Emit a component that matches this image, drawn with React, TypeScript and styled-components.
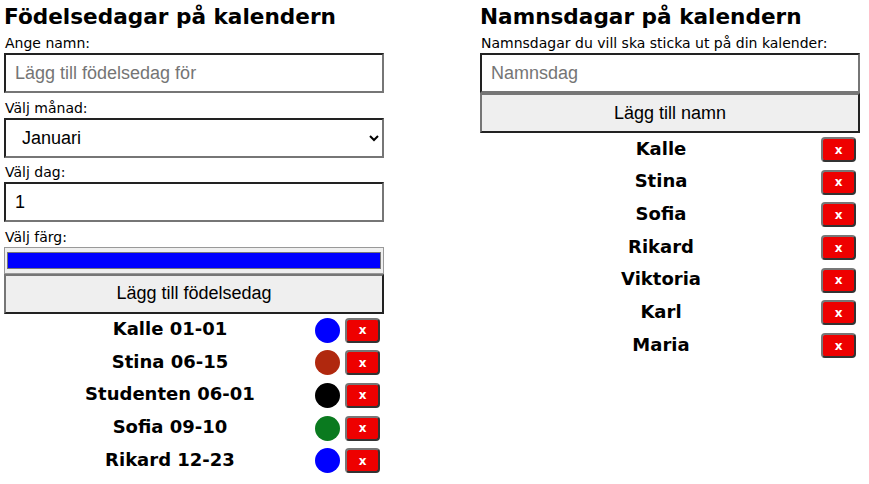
import React, { useState } from "react";
import styled, { createGlobalStyle } from "styled-components";

const GlobalStyle = createGlobalStyle`
  body {
    margin: 0;
    background: #fff;
    font-family: "DejaVu Sans", Verdana, sans-serif;
    color: #000;
  }
`;

interface Birthday {
  name: string;
  date: string;
  color: string;
}

const birthdays: Birthday[] = [
  { name: "Kalle", date: "01-01", color: "#0000ff" },
  { name: "Stina", date: "06-15", color: "#b0280e" },
  { name: "Studenten", date: "06-01", color: "#000000" },
  { name: "Sofia", date: "09-10", color: "#0a7a1f" },
  { name: "Rikard", date: "12-23", color: "#0000ff" },
];

const namedays = ["Kalle", "Stina", "Sofia", "Rikard", "Viktoria", "Karl", "Maria"];

const months = [
  "Januari", "Februari", "Mars", "April", "Maj", "Juni",
  "Juli", "Augusti", "September", "Oktober", "November", "December",
];

const App = () => {
  const [month, setMonth] = useState("Januari");
  const [day, setDay] = useState("1");
  const [color, setColor] = useState("#0000ff");

  return (
    <Page>
      <GlobalStyle />
      <Column>
        <Heading>Födelsedagar på kalendern</Heading>
        <Label>Ange namn:</Label>
        <TextInput placeholder="Lägg till födelsedag för" />
        <Label>Välj månad:</Label>
        <Select value={month} onChange={(e) => setMonth(e.target.value)}>
          {months.map((m) => (
            <option key={m}>{m}</option>
          ))}
        </Select>
        <Label>Välj dag:</Label>
        <TextInput value={day} onChange={(e) => setDay(e.target.value)} />
        <Label>Välj färg:</Label>
        <ColorInput type="color" value={color} onChange={(e) => setColor(e.target.value)} />
        <AddButton>Lägg till födelsedag</AddButton>
        <List>
          {birthdays.map((b) => (
            <Row key={b.name + b.date}>
              <Name>
                {b.name} {b.date}
              </Name>
              <Dot $color={b.color} />
              <DeleteButton>x</DeleteButton>
            </Row>
          ))}
        </List>
      </Column>
      <Column>
        <Heading>Namnsdagar på kalendern</Heading>
        <Label>Namnsdagar du vill ska sticka ut på din kalender:</Label>
        <TextInput placeholder="Namnsdag" $flush />
        <AddButton>Lägg till namn</AddButton>
        <List>
          {namedays.map((n) => (
            <Row key={n}>
              <Name>{n}</Name>
              <DeleteButton>x</DeleteButton>
            </Row>
          ))}
        </List>
      </Column>
    </Page>
  );
};

export default App;

const Page = styled.div`
  display: flex;
  gap: 96px;
  padding: 0 4px;
`;

const Column = styled.div`
  width: 380px;
  display: flex;
  flex-direction: column;
`;

const Heading = styled.h2`
  font-size: 21.6px;
  line-height: 26px;
  font-weight: bold;
  margin: 4px 0 5px 0;
`;

const Label = styled.label`
  display: block;
  font-size: 14px;
  line-height: 17px;
  margin: 0 0 1px 1px;
`;

const fieldBorder = `
  border-style: solid;
  border-width: 2px;
  border-color: #222 #767676 #767676 #222;
`;

const TextInput = styled.input<{ $flush?: boolean }>`
  box-sizing: border-box;
  width: 100%;
  height: 40px;
  ${fieldBorder}
  padding: 0 9px;
  margin: 0 0 ${(p) => (p.$flush ? "0" : "6.5px")};
  font-family: "Liberation Sans", Arial, sans-serif;
  font-size: 18px;
  color: #000;
  background: #fff;
  outline: none;

  &::placeholder {
    color: #757575;
  }
`;

const Select = styled.select`
  box-sizing: border-box;
  width: 100%;
  height: 40px;
  ${fieldBorder}
  padding: 0 6px 0 12px;
  margin: 0 0 6.5px;
  font-family: "Liberation Sans", Arial, sans-serif;
  font-size: 18px;
  color: #000;
  background: #fff;
`;

const ColorInput = styled.input`
  box-sizing: border-box;
  width: 100%;
  height: 27px;
  margin: 0;
  padding: 4px 2px;
  border: 1px solid #999;
  background: #efefef;

  &::-webkit-color-swatch-wrapper {
    padding: 0;
  }
  &::-webkit-color-swatch {
    border: 1px solid #777;
  }
`;

const AddButton = styled.button`
  box-sizing: border-box;
  width: 100%;
  height: 40px;
  margin: 0;
  border-style: solid;
  border-width: 2px;
  border-color: #767676 #222 #222 #767676;
  background: #efefef;
  font-family: "Liberation Sans", Arial, sans-serif;
  font-size: 18px;
  color: #000;
`;

const List = styled.div`
  display: flex;
  flex-direction: column;
  gap: 7.7px;
  padding: 4px 4px 0 26px;
`;

const Row = styled.div`
  display: flex;
  align-items: center;
  gap: 5px;
  height: 25px;
`;

const Name = styled.span`
  flex: 1;
  text-align: center;
  font-size: 18px;
  line-height: 22px;
  font-weight: bold;
  margin-top: -2px;
`;

const Dot = styled.span<{ $color: string }>`
  width: 25px;
  height: 25px;
  border-radius: 50%;
  background: ${(p) => p.$color};
`;

const DeleteButton = styled.button`
  box-sizing: border-box;
  width: 35px;
  height: 25px;
  padding: 0;
  border: 2px solid #555;
  border-color: #777 #333 #333 #777;
  border-radius: 4px;
  background: #ee0000;
  color: #fff;
  font-family: "DejaVu Sans", Verdana, sans-serif;
  font-size: 12px;
  font-weight: bold;
`;
